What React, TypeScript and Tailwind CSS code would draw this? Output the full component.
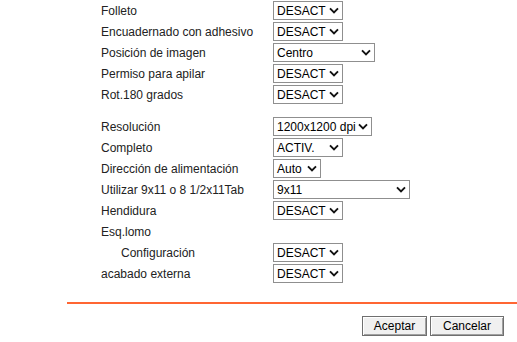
import { ReactNode } from 'react'

type Row = { label: string; value?: string; width?: number; indent?: boolean; gapBefore?: boolean }

const rows: Row[] = [
  { label: 'Folleto', value: 'DESACT', width: 70 },
  { label: 'Encuadernado con adhesivo', value: 'DESACT', width: 70 },
  { label: 'Posición de imagen', value: 'Centro', width: 102 },
  { label: 'Permiso para apilar', value: 'DESACT', width: 70 },
  { label: 'Rot.180 grados', value: 'DESACT', width: 70 },
  { label: 'Resolución', value: '1200x1200 dpi', width: 99, gapBefore: true },
  { label: 'Completo', value: 'ACTIV.', width: 70 },
  { label: 'Dirección de alimentación', value: 'Auto', width: 48 },
  { label: 'Utilizar 9x11 o 8 1/2x11Tab', value: '9x11', width: 137 },
  { label: 'Hendidura', value: 'DESACT', width: 70 },
  { label: 'Esq.lomo' },
  { label: 'Configuración', value: 'DESACT', width: 70, indent: true },
  { label: 'acabado externa', value: 'DESACT', width: 70 },
]

function Chevron() {
  return (
    <svg width="10" height="7" viewBox="0 0 10 7" className="shrink-0">
      <path d="M1 1.3 L5 5.3 L9 1.3" fill="none" stroke="#111" strokeWidth="1.9" />
    </svg>
  )
}

function FakeSelect({ value, width }: { value: string; width: number }) {
  return (
    <div
      className="flex items-center justify-between gap-[2px] h-[19px] border border-[#8f8f8f] bg-white pl-[3px] pr-[3px] text-[12px] text-black"
      style={{ width }}
    >
      <span className="leading-none whitespace-nowrap">{value}</span>
      <Chevron />
    </div>
  )
}

function Btn({ children, w }: { children: ReactNode; w: string }) {
  return (
    <button
      className={`${w} h-[20px] border border-[#6f6f6f] bg-[#f0f0f0] text-[12px] text-black leading-none shadow-[inset_1px_1px_0_#fff,inset_-1px_-1px_0_#a0a0a0]`}
    >
      {children}
    </button>
  )
}

export default function App() {
  return (
    <div
      className="w-[517px] h-[342px] bg-white overflow-hidden text-[12px] text-[#222]"
      style={{ fontFamily: "Arial, 'Liberation Sans', sans-serif" }}
    >
      <div className="flex flex-col">
        {rows.map((r) => (
          <div key={r.label} className={`flex items-center h-[21px] ${r.gapBefore ? 'mt-[11px]' : ''}`}>
            <div className={`w-[273px] shrink-0 ${r.indent ? 'pl-[121px]' : 'pl-[101px]'}`}>{r.label}</div>
            {r.value && <FakeSelect value={r.value} width={r.width!} />}
          </div>
        ))}
      </div>
      <div className="ml-[67px] mt-[18px] h-[2px] bg-[#ff6633]" />
      <div className="flex justify-end gap-[3px] pr-[13px] mt-[12px]">
        <Btn w="w-[65px]">Aceptar</Btn>
        <Btn w="w-[74px]">Cancelar</Btn>
      </div>
    </div>
  )
}
